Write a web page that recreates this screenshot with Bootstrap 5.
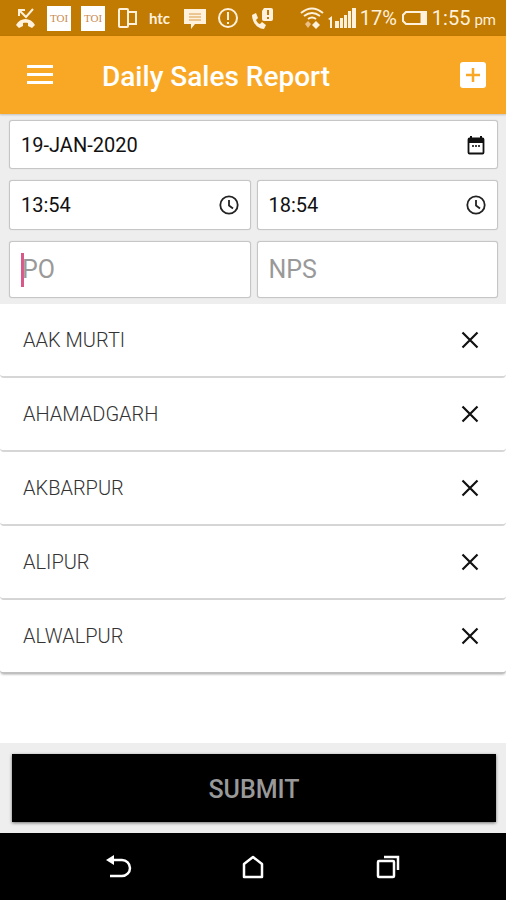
<!DOCTYPE html>
<html lang="en">
<head>
<meta charset="utf-8">
<meta name="viewport" content="width=device-width, initial-scale=1">
<title>Daily Sales Report</title>
<link href="https://cdn.jsdelivr.net/npm/bootstrap@5.3.0/dist/css/bootstrap.min.css" rel="stylesheet">
<style>
body { font-family: Roboto, sans-serif; }
svg { display: block; flex: none; }
.status-bar { background: #c17a02; height: 36px; padding: 0 10px 0 13px; color: #fff1dc; }
.status-notes { gap: 10px; }
.status-notes > * { width: 24px; }
.toi { background: #fff; color: #c98a50; height: 25px; font: 11px/25px "Liberation Serif", serif; text-align: center; }
.htc { font: bold 15px/24px Lato, sans-serif; }
.status-info { font-size: 20px; line-height: 24px; gap: 4px; }
.status-info .meridiem { font-size: 15px; padding-top: 3px; }
.app-bar { background: #f9a825; height: 78px; padding: 0 20px 0 26px; color: #fff; box-shadow: 0 1px 2px #0003; z-index: 1; }
.app-title { font-size: 28px; line-height: 32px; font-weight: 500; margin-left: 48px; padding-top: 4px; }
.icon-btn { background: none; border: 0; padding: 0; color: inherit; }
.form-panel { background: #eee; padding: 6px 8px 6px 9px; }
.form-rows { gap: 11px; }
.pair { gap: 6px; }
.field { background: #fff; border: 1px solid #c6c6c6; border-radius: 3px; height: 49px; padding: 0 11px; min-width: 0; box-shadow: 0 0 1px #0003; }
.pair .field { height: 50px; }
.pair .field-lg { height: 57px; }
.field input { border: 0; outline: 0; padding: 0; background: none; width: 100%; min-width: 0; font-size: 20px; line-height: 24px; color: #111; }
.field-lg input { font-size: 25px; line-height: 34px; }
.field input::placeholder { color: #999; opacity: 1; }
.caret-on::before { content: ""; width: 3px; height: 34px; margin-right: -2px; background: #d9588a; flex: none; }
.place { height: 74px; padding: 0 24px 0 23px; border-bottom: 2px solid #d6d6d6; border-radius: 0 0 4px 4px; font-size: 20px; line-height: 24px; font-weight: 300; color: #333; }
.place:last-child { box-shadow: 0 1px 2px #0003; border-color: #c0c0c0; }
.submit-panel { background: #eee; padding: 11px 10px 11px 12px; }
.submit-btn { background: #000; color: #999; border: 0; height: 68px; padding-top: 4px; font-size: 25px; line-height: 30px; font-weight: 500; box-shadow: 0 1px 3px #0008; }
.nav-keys { background: #000; height: 67px; color: #fff; padding: 0 51px; }
</style>
</head>
<body class="bg-white">
<div class="d-flex flex-column min-vh-100">
  <div class="status-bar d-flex align-items-center justify-content-between">
    <div class="status-notes d-flex align-items-center">
      <svg height="24" viewBox="0 0 24 24" fill="none" stroke="currentColor" aria-hidden="true"><path d="M6 10V4h6M6 4l7 7 7-8" stroke-width="2"/><path d="M3 19c4-8 15-8 19 0l-3 3-4-2v-3c-1-.4-4-.4-5 0v3l-4 2z" fill="currentColor" stroke="none"/></svg>
      <span class="toi">TOI</span>
      <span class="toi">TOI</span>
      <svg height="24" viewBox="0 0 24 24" fill="none" stroke="currentColor" stroke-width="2" aria-hidden="true"><rect x="4" y="3" width="9" height="18" rx="1"/><path d="M13 6h8v12h-8"/></svg>
      <span class="htc">htc</span>
      <svg height="24" viewBox="0 0 24 24" fill="currentColor" aria-hidden="true"><path d="M1 3h22v15H12l-4 5v-5H1z"/><path d="M6 8h12M6 11h12M6 14h12" stroke="#d99b45"/></svg>
      <svg height="24" viewBox="0 0 24 24" fill="none" stroke="currentColor" stroke-width="2" aria-hidden="true"><circle cx="11" cy="12" r="9"/><path d="M11 6v8M11 16v2"/></svg>
      <svg height="24" viewBox="0 0 24 24" fill="currentColor" aria-hidden="true"><path d="M13 2h7q2 0 2 2v9q0 2-2 2h-7q-2 0-2-2V5z"/><path d="M1 9l4-2 2 5-2 2q2 4 4 4l2-2 4 3-2 4C6 23 1 16 1 9z"/><path d="M17 4v5M17 11v2" stroke="#c17a02" stroke-width="2"/></svg>
    </div>
    <div class="status-info d-flex align-items-center">
      <svg width="24" height="24" viewBox="0 0 24 24" fill="none" stroke="currentColor" stroke-width="2" aria-hidden="true"><path d="M1 7Q12-2 23 7M4 10q8-6 16 0M8 13q4-3 8 0"/><path d="M16 23l-4-4 4-4 4 4z" fill="currentColor" stroke="none"/><path d="M8 15l3 3-3 4-3-4z" fill="#eac088" stroke="none"/></svg>
      <svg width="28" height="24" viewBox="0 0 28 24" fill="currentColor" aria-hidden="true"><path d="M0 13l4-3v12H2v-8zM7 15h4v7H7zM12 12h3v10h-3zM16 9h3v13h-3zM20 5h3v17h-3zM24 2h4v20h-4z"/></svg>
      <span>17%</span>
      <svg width="27" height="24" viewBox="0 0 27 24" fill="none" stroke="currentColor" stroke-width="2" aria-hidden="true"><path d="M5 6h20v12H5l-3-3V9z"/><path d="M22 7v10" stroke-width="5"/></svg>
      <span>1:55</span><span class="meridiem">pm</span>
    </div>
  </div>

  <header class="app-bar d-flex align-items-center position-relative">
    <button class="icon-btn" type="button" aria-label="Menu"><svg width="28" height="28" viewBox="0 0 28 28" stroke="currentColor" stroke-width="3" aria-hidden="true"><path d="M1 5.500h26M1 13.500h26M1 21.500h26"/></svg></button>
    <h1 class="app-title mb-0 flex-grow-1">Daily Sales Report</h1>
    <button class="icon-btn" type="button" aria-label="Add"><svg width="26" height="26" viewBox="0 0 26 26" aria-hidden="true"><rect width="26" height="26" rx="3" fill="#fff"/><path d="M13 6v14M6 13h14" stroke="#f9a825" stroke-width="2.500"/></svg></button>
  </header>

  <main class="d-flex flex-column flex-grow-1">
    <form id="report" class="form-panel">
      <div class="form-rows d-flex flex-column">
        <div class="field d-flex align-items-center">
          <input type="text" value="19-JAN-2020" aria-label="Date">
          <svg width="20" height="20" viewBox="0 0 20 20" aria-hidden="true"><rect x="2.500" y="3.500" width="15" height="15" rx="1" fill="none" stroke="#111" stroke-width="1.800"/><path d="M2 3h16v5H2zM4 1h2v3H4zM14 1h2v3h-2z" fill="#111"/><path d="M6 11h8" stroke="#444" stroke-width="2" stroke-dasharray="2 1"/></svg>
        </div>
        <div class="pair d-flex">
          <div class="field d-flex align-items-center w-50">
            <input type="text" value="13:54" aria-label="Start time">
            <svg width="20" height="20" viewBox="0 0 20 20" fill="none" stroke="#222" stroke-width="1.800" aria-hidden="true"><circle cx="10" cy="10" r="8.700"/><path d="M10 5v5.500l4 3"/></svg>
          </div>
          <div class="field d-flex align-items-center w-50">
            <input type="text" value="18:54" aria-label="End time">
            <svg width="20" height="20" viewBox="0 0 20 20" fill="none" stroke="#222" stroke-width="1.800" aria-hidden="true"><circle cx="10" cy="10" r="8.700"/><path d="M10 5v5.500l4 3"/></svg>
          </div>
        </div>
        <div class="pair d-flex">
          <div class="field field-lg caret-on d-flex align-items-center w-50"><input type="text" placeholder="PO" aria-label="PO"></div>
          <div class="field field-lg d-flex align-items-center w-50"><input type="text" placeholder="NPS" aria-label="NPS"></div>
        </div>
      </div>
    </form>

    <ul class="list-unstyled mb-0">
      <li class="place d-flex align-items-center justify-content-between">AAK MURTI<button class="icon-btn" type="button" aria-label="Remove AAK MURTI"><svg width="24" height="24" viewBox="0 0 24 24" stroke="#111" stroke-width="2.200" aria-hidden="true"><path d="M4.500 4.500l15 15M19.500 4.500l-15 15"/></svg></button></li>
      <li class="place d-flex align-items-center justify-content-between">AHAMADGARH<button class="icon-btn" type="button" aria-label="Remove AHAMADGARH"><svg width="24" height="24" viewBox="0 0 24 24" stroke="#111" stroke-width="2.200" aria-hidden="true"><path d="M4.500 4.500l15 15M19.500 4.500l-15 15"/></svg></button></li>
      <li class="place d-flex align-items-center justify-content-between">AKBARPUR<button class="icon-btn" type="button" aria-label="Remove AKBARPUR"><svg width="24" height="24" viewBox="0 0 24 24" stroke="#111" stroke-width="2.200" aria-hidden="true"><path d="M4.500 4.500l15 15M19.500 4.500l-15 15"/></svg></button></li>
      <li class="place d-flex align-items-center justify-content-between">ALIPUR<button class="icon-btn" type="button" aria-label="Remove ALIPUR"><svg width="24" height="24" viewBox="0 0 24 24" stroke="#111" stroke-width="2.200" aria-hidden="true"><path d="M4.500 4.500l15 15M19.500 4.500l-15 15"/></svg></button></li>
      <li class="place d-flex align-items-center justify-content-between">ALWALPUR<button class="icon-btn" type="button" aria-label="Remove ALWALPUR"><svg width="24" height="24" viewBox="0 0 24 24" stroke="#111" stroke-width="2.200" aria-hidden="true"><path d="M4.500 4.500l15 15M19.500 4.500l-15 15"/></svg></button></li>
    </ul>

    <div class="submit-panel mt-auto"><button class="submit-btn w-100" type="submit" form="report">SUBMIT</button></div>
  </main>

  <nav class="nav-keys d-flex align-items-center justify-content-around" aria-label="System">
    <button class="icon-btn" type="button" aria-label="Back"><svg width="26" height="26" viewBox="0 0 26 26" fill="none" stroke="currentColor" stroke-width="2.500" aria-hidden="true"><path d="M6 6h10a8 8 0 0 1 0 16H4"/><path d="M0 6l8-5v10z" fill="currentColor" stroke="none"/></svg></button>
    <button class="icon-btn" type="button" aria-label="Home"><svg width="24" height="26" viewBox="0 0 24 26" fill="none" stroke="currentColor" stroke-width="2.500" stroke-linejoin="round" aria-hidden="true"><path d="M3 10l9-7 9 7v13H3z"/></svg></button>
    <button class="icon-btn" type="button" aria-label="Recent apps"><svg width="26" height="26" viewBox="0 0 26 26" fill="none" stroke="currentColor" stroke-width="2.500" aria-hidden="true"><rect x="4" y="7" width="16" height="16" rx="1"/><path d="M10 3h14v13"/></svg></button>
  </nav>
</div>
<script src="https://cdn.jsdelivr.net/npm/bootstrap@5.3.0/dist/js/bootstrap.bundle.min.js"></script>
</body>
</html>
